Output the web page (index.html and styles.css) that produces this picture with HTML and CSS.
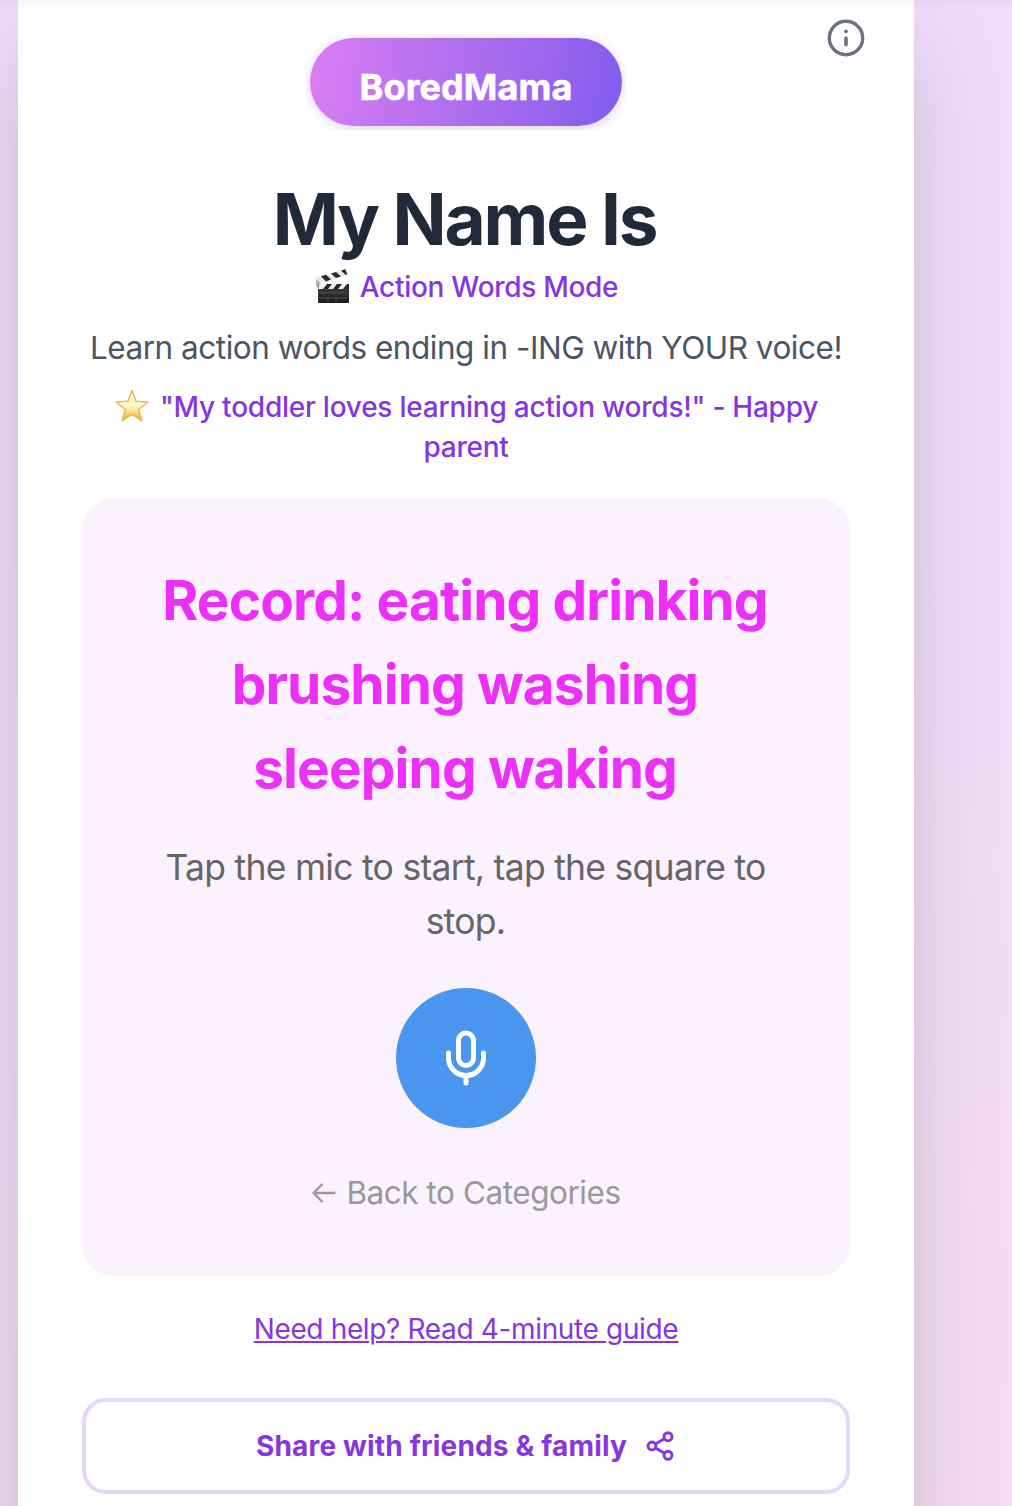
FILE: index.html
```html
<!DOCTYPE html>
<html lang="en">
<head>
<meta charset="utf-8">
<title>My Name Is</title>
<link rel="stylesheet" href="styles.css">
</head>
<body>
<main class="card">
  <button class="info" aria-label="Information">
    <svg viewBox="0 0 40 40" fill="none" stroke="currentColor" stroke-width="3.4" stroke-linecap="round"><circle cx="20" cy="20" r="16.7"/><path d="M20 20v6.600" stroke-width="3.600"/><circle cx="20" cy="13.3" r="1.9" fill="currentColor" stroke="none"/></svg>
  </button>
  <div class="logo"><div class="pill"><span>BoredMama</span></div></div>
  <h1 class="title"><span>My Name Is</span></h1>
  <p class="mode">
    <svg class="emoji" viewBox="0 0 36 36"><defs><linearGradient id="board" x2="0" y2="1"><stop stop-color="#444"/><stop offset="1" stop-color="#191919"/></linearGradient></defs><path d="M1 10 32 1l2 5L5 16z" fill="#e8e8e8"/><path d="m7 8.300 5-1.500 5 4.800-5 1.800zM17 5.400l5-1.500 5 4.600-5 1.600zM27 2.500l4-1.200 2.500 4.900-2 .6z" fill="#292929"/><path d="M2 11.500 6 14l2 5-4 2-2-3z" fill="#b6b6b6"/><path d="M4 16h31v18q0 1-1 1H5q-1 0-1-1z" fill="url(#board)"/><path d="M5 16h30v5H4z" fill="#eee"/><path d="m9 21 4-5h5l-4 5zM19 21l4-5h5l-4 5zM29 21l4-5h2v5z" fill="#282828"/><path d="M5 25h28M5 30h28M14 31v3M22 31v3" stroke="#666" stroke-width=".7"/></svg>
    <span>Action Words Mode</span>
  </p>
  <p class="lead"><span>Learn action words ending in -ING with YOUR voice!</span></p>
  <p class="quote">
    <span class="quote-row"><svg class="emoji" viewBox="0 0 36 36"><defs><linearGradient id="gold" x2="0" y2="1"><stop stop-color="#fff3ba"/><stop offset=".5" stop-color="#fff9c9"/><stop offset="1" stop-color="#efae18"/></linearGradient></defs><path d="M18 2.300 22.200 13.200 34 13.900 24.800 21.300 28 33 18 26.400 8 33l3.200-11.700L2 13.900l11.800-.7z" fill="url(#gold)" stroke="#e7b454" stroke-width="1.300" stroke-linejoin="round"/></svg><span>"My toddler loves learning action words!" - Happy</span></span>
    <span>parent</span>
  </p>
  <section class="panel">
    <h2 class="words"><span>Record: eating drinking</span><br><span>brushing washing</span><br><span>sleeping waking</span></h2>
    <p class="hint"><span>Tap the mic to start, tap the square to</span><br><span>stop.</span></p>
    <button class="mic" aria-label="Record">
      <svg viewBox="0 0 60 60" fill="none" stroke="currentColor" stroke-width="5" stroke-linecap="round" stroke-linejoin="round"><rect x="22.500" y="5" width="15" height="32.500" rx="7.500"/><path d="M12.500 25v5a17.500 17.500 0 0 0 35 0V25M30 47.500v7.500"/></svg>
    </button>
    <a class="back"><svg viewBox="0 0 24 20" fill="none" stroke="currentColor" stroke-width="2.300" stroke-linecap="round" stroke-linejoin="round"><path d="M22.500 10H1.500M10 1.500 1.500 10l8.500 8.500"/></svg><span>Back to Categories</span></a>
  </section>
  <a class="help"><span>Need help? Read 4-minute guide</span></a>
  <button class="share"><span>Share with friends &amp; family</span>
    <svg viewBox="0 0 24 24" fill="none" stroke="currentColor" stroke-width="2.200" stroke-linecap="round"><circle cx="18" cy="5" r="3"/><circle cx="6" cy="12" r="3"/><circle cx="18" cy="19" r="3"/><path d="m8.600 13.500 6.800 4M15.400 6.500l-6.800 4"/></svg>
  </button>
</main>
</body>
</html>
```
FILE: styles.css
```css
* { box-sizing: border-box; margin: 0; padding: 0; }
html, body { height: 1506px; overflow: hidden; }
body {
  font-family: Inter, "Liberation Sans", sans-serif;
  background: linear-gradient(155deg, #efdcf9 0%, #f1ddf9 45%, #f4dcf2 100%);
}
body::before {
  content: "";
  position: absolute;
  inset: 0 0 auto;
  height: 10px;
  z-index: 1;
  background: linear-gradient(rgba(0, 0, 0, .03), transparent);
}
button { border: 0; background: none; font: inherit; }
svg { display: block; flex: none; }
span { white-space: nowrap; }
.card {
  position: relative;
  display: flex;
  flex-direction: column;
  width: 896px;
  height: 1620px;
  margin: -20px 0 0 18px;
  padding: 54px 64px 0;
  background: #fff;
  box-shadow: 0 50px 100px -24px rgba(0, 0, 0, .25);
  text-align: center;
}
.info { position: absolute; top: 38px; right: 48px; color: #6b7280; }
.info svg { width: 40px; height: 40px; }
.logo { align-self: center; width: 320px; height: 96px; padding: 4px; overflow: hidden; }
.pill {
  display: flex;
  align-items: center;
  justify-content: center;
  height: 88px;
  padding-top: 10px;
  border-radius: 44px;
  background: linear-gradient(100deg, #db7df2, #b571ef 40%, #a168ee 67%, #805ced);
  box-shadow: 0 2px 12px rgba(124, 92, 237, .28);
  color: #fff;
  font-size: 36px;
  font-weight: 700;
  letter-spacing: .1px;
  -webkit-text-stroke: .6px #fff;
}
.title { margin-top: 49px; padding-right: 3px; font-size: 71px; line-height: 80px; font-weight: 700; letter-spacing: -2.17px; color: #1f2937; }
.mode, .quote { font-size: 28px; line-height: 40px; font-weight: 500; color: #8636df; }
.mode { display: flex; justify-content: center; gap: 10px; margin-top: 8px; letter-spacing: -.3px; }
.emoji { width: 36px; height: 36px; margin-top: 1px; }
.lead { display: flex; justify-content: center; margin-top: 17px; font-size: 31.5px; line-height: 48px; letter-spacing: -.485px; color: #4b5563; }
.quote { margin-top: 15px; letter-spacing: -.23px; }
.quote-row { display: flex; justify-content: center; gap: 10px; }
.panel {
  display: flex;
  flex-direction: column;
  align-items: center;
  height: 778px;
  margin-top: 31px;
  padding-top: 60px;
  border-radius: 32px;
  background: #fbf1ff;
}
.words { padding-right: 2px; font-size: 55px; line-height: 84px; font-weight: 700; letter-spacing: -.9px; color: #ec30f7; }
.hint { padding-right: 1px; margin-top: 31px; font-size: 35.5px; line-height: 54px; letter-spacing: -.72px; color: #666; }
.mic {
  display: grid;
  place-items: center;
  width: 140px;
  height: 140px;
  margin-top: 39px;
  border-radius: 50%;
  background: #4a95ed;
  color: #fff;
}
.mic svg { width: 60px; height: 60px; }
.back { display: flex; align-items: center; gap: 10px; margin-top: 41px; padding-left: 1px; font-size: 31.5px; line-height: 48px; letter-spacing: -.46px; color: #999; }
.back svg { width: 24px; height: 20px; }
.help { margin-top: 33px; font-size: 28px; line-height: 40px; letter-spacing: -.35px; color: #8636df; text-decoration: underline; text-decoration-thickness: 2px; text-underline-offset: 2px; }
.share {
  display: flex;
  align-items: center;
  justify-content: center;
  gap: 17px;
  height: 96px;
  margin-top: 49px;
  border: 4px solid #e6d6fd;
  border-radius: 24px;
  color: #8636df;
  font-size: 28px;
  font-weight: 650;
  letter-spacing: .17px;
}
.share svg { width: 32px; height: 32px; }
```
